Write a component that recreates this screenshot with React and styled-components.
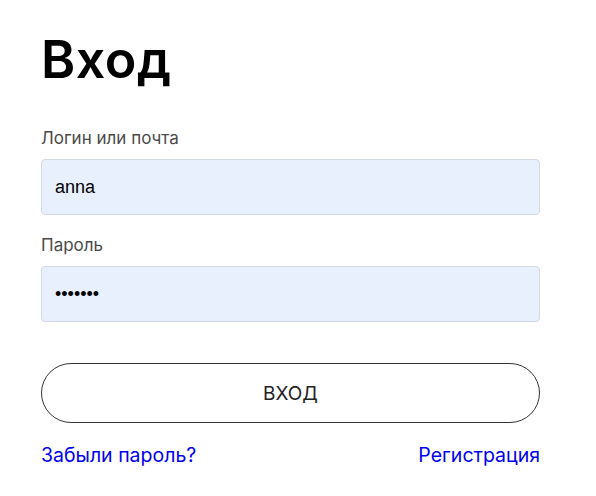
import React from 'react';
import styled, { createGlobalStyle } from 'styled-components';

const Global = createGlobalStyle`
body {
  margin: 0;
  background: #fff;
  font-family: Inter, "Noto Sans", sans-serif;
}
`;

const Page = styled.div`
width: 499px;
padding: 22px 0 0 41px;
display: flex;
flex-direction: column;
`;

const Title = styled.h1`
margin: 0 0 30px;
font-size: 52px;
font-weight: 600;
line-height: 76px;
color: #000;
letter-spacing: 0.5px;
`;

const Form = styled.form`
display: flex;
flex-direction: column;
`;

const Field = styled.div`
display: flex;
flex-direction: column;
gap: 10px;
margin-bottom: ${p => p.$last ? '41px' : '20px'};
`;

const Label = styled.label`
font-size: 17px;
line-height: 21px;
color: #4a4a4a;
`;

const Input = styled.input`
box-sizing: border-box;
width: 100%;
height: 56px;
padding: 0 13px;
border: 1px solid #d3d9e2;
border-radius: 4px;
background: #e8f0fe;
font-family: "Liberation Sans", Arial, sans-serif;
font-size: 18px;
color: #000;
outline: none;
`;

const Button = styled.button`
box-sizing: border-box;
width: 100%;
height: 60px;
border: 1px solid #333;
border-radius: 30px;
background: #fff;
font-family: Inter, "Noto Sans", sans-serif;
font-size: 19px;
color: #222;
cursor: pointer;
`;

const Links = styled.div`
display: flex;
justify-content: space-between;
margin-top: 20px;
`;

const Link = styled.a`
font-size: 19.5px;
line-height: 24px;
color: #0000ee;
text-decoration: none;
`;

export default function App() {
  return (
    <Page>
      <Global />
      <Title>Вход</Title>
      <Form onSubmit={e => e.preventDefault()}>
        <Field>
          <Label>Логин или почта</Label>
          <Input defaultValue="anna" />
        </Field>
        <Field $last>
          <Label>Пароль</Label>
          <Input type="password" defaultValue="1234567" />
        </Field>
        <Button type="submit">ВХОД</Button>
        <Links>
          <Link href="#">Забыли пароль?</Link>
          <Link href="#">Регистрация</Link>
        </Links>
      </Form>
    </Page>
  );
}
